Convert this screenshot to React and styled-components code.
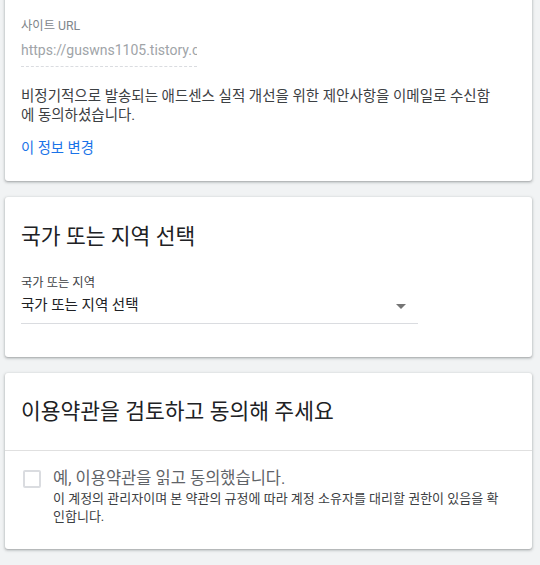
import React from 'react';
import styled, { createGlobalStyle } from 'styled-components';

const GlobalStyle = createGlobalStyle`
  html, body {
    margin: 0;
    padding: 0;
    background: #f1f3f4;
    font-family: Roboto, "Noto Sans CJK KR", sans-serif;
  }
`;

const Page = styled.div`
  width: 527px;
  margin-left: 5px;
  display: flex;
  flex-direction: column;
  gap: 16px;
  padding-bottom: 15px;
`;

const Card = styled.section`
  background: #fff;
  border-radius: 3px;
  box-shadow: 0 1px 2px 0 rgba(60, 64, 67, 0.3), 0 1px 3px 1px rgba(60, 64, 67, 0.15);
  padding: ${(p) => p.$pad || '0'};
  margin-top: ${(p) => p.$top || '0'};
`;

const FieldLabel = styled.div`
  margin-top: ${(p) => p.$gap || '0'};
  font-size: 12.3px;
  line-height: 16px;
  color: ${(p) => (p.$dark ? '#3c4043' : '#80868b')};
`;

const UrlField = styled.div`
  width: 176px;
  margin-top: 5px;
  padding-bottom: 5px;
  border-bottom: 1px dashed #dadce0;
  font-size: 14px;
  line-height: 22px;
  color: #a0a4a8;
  white-space: nowrap;
  overflow: hidden;
`;

const Paragraph = styled.p`
  margin: 20px 0 0;
  max-width: 480px;
  font-size: 14.5px;
  line-height: 19px;
  color: #3c4043;
`;

const Link = styled.a`
  display: block;
  margin-top: 14px;
  font-size: 14.3px;
  line-height: 19px;
  color: #1a73e8;
  text-decoration: none;
`;

const Heading = styled.h2`
  margin: 0;
  font-size: 21.5px;
  font-weight: 400;
  line-height: 28px;
  color: #202124;
`;

const CardHeader = styled.div`
  padding: 25px 16px 24px;
  border-bottom: 1px solid #e0e0e0;
`;

const CardBody = styled.div`
  padding: 19px 16px 23px 18px;
  display: flex;
  align-items: flex-start;
  gap: 12px;
`;

const SelectRow = styled.div`
  width: 397px;
  margin-top: 5px;
  padding-bottom: 7px;
  border-bottom: 1px solid #dadce0;
  display: flex;
  align-items: center;
  justify-content: space-between;
  font-size: 14.5px;
  line-height: 20px;
  color: #202124;
`;

const Arrow = styled.span`
  width: 0;
  height: 0;
  margin-right: 12px;
  border-left: 5px solid transparent;
  border-right: 5px solid transparent;
  border-top: 5px solid #757575;
`;

const Box = styled.span`
  flex: none;
  box-sizing: border-box;
  width: 18px;
  height: 18px;
  border: 2px solid #dadce0;
  border-radius: 2px;
`;

const CheckText = styled.div`
  display: flex;
  flex-direction: column;
  gap: 2px;
`;

const CheckLabel = styled.div`
  font-size: 16.5px;
  line-height: 18px;
  color: #5f6368;
`;

const CheckNote = styled.div`
  max-width: 451px;
  font-size: 13px;
  line-height: 18px;
  color: #3c4043;
`;

export default function App() {
  return (
    <>
      <GlobalStyle />
      <Page>
        <Card $pad="28px 16px 23px" $top="-10px">
          <FieldLabel>사이트 URL</FieldLabel>
          <UrlField>https://guswns1105.tistory.com</UrlField>
          <Paragraph>
            비정기적으로 발송되는 애드센스 실적 개선을 위한 제안사항을 이메일로 수신함에 동의하셨습니다.
          </Paragraph>
          <Link href="#">이 정보 변경</Link>
        </Card>

        <Card $pad="26px 16px 33px">
          <Heading>국가 또는 지역 선택</Heading>
          <FieldLabel $dark $gap="24px">국가 또는 지역</FieldLabel>
          <SelectRow>
            <span>국가 또는 지역 선택</span>
            <Arrow />
          </SelectRow>
        </Card>

        <Card>
          <CardHeader>
            <Heading>이용약관을 검토하고 동의해 주세요</Heading>
          </CardHeader>
          <CardBody>
            <Box />
            <CheckText>
              <CheckLabel>예, 이용약관을 읽고 동의했습니다.</CheckLabel>
              <CheckNote>
                이 계정의 관리자이며 본 약관의 규정에 따라 계정 소유자를 대리할 권한이 있음을 확인합니다.
              </CheckNote>
            </CheckText>
          </CardBody>
        </Card>
      </Page>
    </>
  );
}
